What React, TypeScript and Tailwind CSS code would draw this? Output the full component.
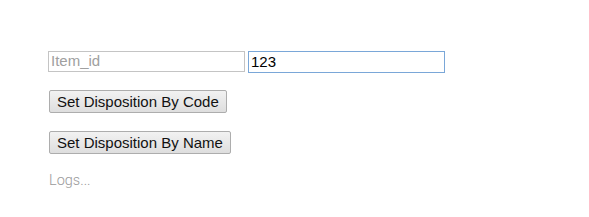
export default function App() {
  return (
    <div className="min-h-screen bg-white pl-[48px] pt-[51px] font-['Liberation_Sans',Arial,sans-serif]">
      <div className="flex gap-[3px]">
        <input
          placeholder="Item_id"
          className="h-[21px] w-[197px] border border-[#c4c4c4] px-[2px] text-[15px] text-black outline-none placeholder:text-[#a0a0a0]"
        />
        <input
          defaultValue="123"
          className="h-[22px] w-[197px] border border-[#7aa7d8] px-[2px] text-[15px] text-black outline-none"
        />
      </div>

      <div className="mt-[17px] flex flex-col items-start gap-[18px]">
        <button
          type="button"
          className="ml-px h-[23px] rounded-[2px] border border-[#adadad] bg-gradient-to-b from-[#f2f2f2] to-[#dedede] px-[7px] text-[15px] leading-none text-[#111]"
        >
          Set Disposition By Code
        </button>
        <button
          type="button"
          className="ml-px h-[23px] rounded-[2px] border border-[#adadad] bg-gradient-to-b from-[#f2f2f2] to-[#dedede] px-[7px] text-[15px] leading-none text-[#111]"
        >
          Set Disposition By Name
        </button>
      </div>

      <p className="mt-[16px] pl-px font-['Roboto',sans-serif] text-[14.5px] font-light text-[#9a9a9a]">
        Logs...
      </p>
    </div>
  );
}
